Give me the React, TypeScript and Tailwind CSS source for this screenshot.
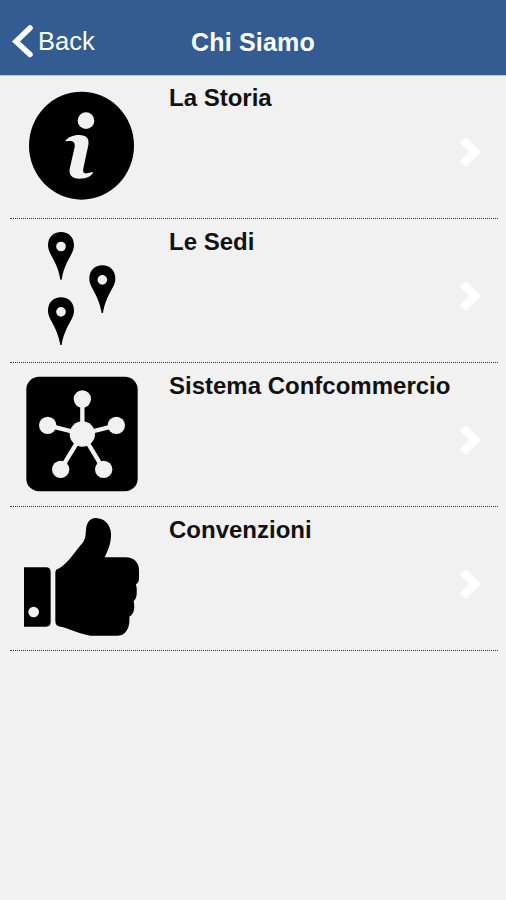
import React from "react";

interface MenuItem {
  title: string;
  icon: React.ReactNode;
}

const InfoIcon = () => (
  <svg viewBox="30 -3 450 429" className="w-[150px] h-[143px]">
    <ellipse cx="244.500" cy="209" rx="157.500" ry="162" fill="#000" />
    <circle cx="258" cy="134" r="25" fill="#f1f1f1" />
    <path
      d="M195 196C202 184 219 177 237 177C260 177 268 188 265 207L250 277C247 291 254 295 264 291L280 288C276 301 258 308 239 308C216 308 206 297 209 279L224 213C226 200 220 195 208 195Z"
      fill="#f1f1f1"
    />
  </svg>
);

// Single map pin, its tip hanging below the round head
const Pin = ({ x, y }: { x: number; y: number }) => (
  <path
    transform={`translate(${x} ${y})`}
    fillRule="evenodd"
    fill="#000"
    d="M0 -43C23 -43 39 -27 39 -3C39 25 11 42 2 100H-2C-11 42 -39 25 -39 -3C-39 -27 -23 -43 0 -43ZM0 -14A14.500 14.500 0 1 0 0 15A14.500 14.500 0 1 0 0 -14Z"
  />
);

const PinsIcon = () => (
  <svg viewBox="30 -3 450 429" className="w-[150px] h-[143px]">
    <Pin x={183} y={79} />
    <Pin x={307} y={179} />
    <Pin x={183} y={275} />
  </svg>
);

const NetworkIcon = () => (
  <svg viewBox="30 -3 450 429" className="w-[150px] h-[143px]">
    <rect x="79" y="38" width="334" height="344" rx="38" fill="#000" />
    <g stroke="#f1f1f1" strokeWidth="13">
      <path d="M247 210V105M247 210L143 184M247 210L349 184M247 210L182 316M247 210L311 316" />
    </g>
    <g fill="#f1f1f1">
      <circle cx="247" cy="210" r="38" />
      <circle cx="247" cy="105" r="26" />
      <circle cx="143" cy="184" r="26" />
      <circle cx="349" cy="184" r="26" />
      <circle cx="182" cy="316" r="26" />
      <circle cx="311" cy="316" r="26" />
    </g>
  </svg>
);

const ThumbIcon = () => (
  <svg viewBox="30 3 450 429" className="w-[150px] h-[143px]">
    <path d="M72 184H138Q152 184 152 198V348Q152 362 138 362H72Z" fill="#000" />
    <circle cx="101" cy="318" r="16" fill="#f1f1f1" />
    <path
      d="M166 200Q166 190 178 187C205 171 224 137 247 112C262 94 254 71 262 53C268 40 278 36 288 36C313 37 331 55 333 82C334 111 325 131 314 154H378C401 154 417 170 417 192V216Q417 230 408 235Q412 250 410 265Q409 279 401 285Q405 305 400 319Q396 328 388 332C391 365 377 388 354 389H272C242 385 213 370 187 363Q166 363 166 346Z"
      fill="#000"
    />
  </svg>
);

const items: MenuItem[] = [
  { title: "La Storia", icon: <InfoIcon /> },
  { title: "Le Sedi", icon: <PinsIcon /> },
  { title: "Sistema Confcommercio", icon: <NetworkIcon /> },
  { title: "Convenzioni", icon: <ThumbIcon /> },
];

const Header = () => (
  <header className="grid grid-cols-[1fr_auto_1fr] h-[76px] bg-[#325c92] text-white border-b border-[#b5c3da]">
    {/* Back Button */}
    <button className="flex items-start pl-3 pt-6">
      <svg viewBox="0 0 22 34" className="w-[22px] h-[34px]" fill="none">
        <path
          d="M18 4L4 17.500L18 30.500"
          stroke="#fff"
          strokeWidth="5.500"
          strokeLinecap="round"
        />
      </svg>
      <span className="ml-1 text-[25.500px] leading-[34px]">Back</span>
    </button>
    <h1 className="pt-[25px] text-[25px] leading-[34px] font-bold tracking-[0.2px]">
      Chi Siamo
    </h1>
  </header>
);

const MenuRow = ({ title, icon }: MenuItem) => (
  <li className="flex h-36 border-b border-dotted border-[#333333]">
    {icon}
    <h2 className="flex-1 pl-[9px] pt-2 text-[24px] leading-[30px] font-bold text-[#111111] whitespace-nowrap">
      {title}
    </h2>
    <svg
      viewBox="0 0 24 32"
      className="w-6 h-8 mt-[61px] mr-[14px]"
      fill="none"
    >
      <path
        d="M3 4L15 16L3 28"
        stroke="#fff"
        strokeWidth="8.500"
      />
    </svg>
  </li>
);

const App = () => {
  return (
    <div className="min-h-screen bg-[#f1f1f1] font-['Liberation_Sans',Arial,sans-serif]">
      <Header />
      <ul className="-mt-px ml-[10px] mr-2">
        {items.map((item) => (
          <MenuRow key={item.title} {...item} />
        ))}
      </ul>
    </div>
  );
};

export default App;
